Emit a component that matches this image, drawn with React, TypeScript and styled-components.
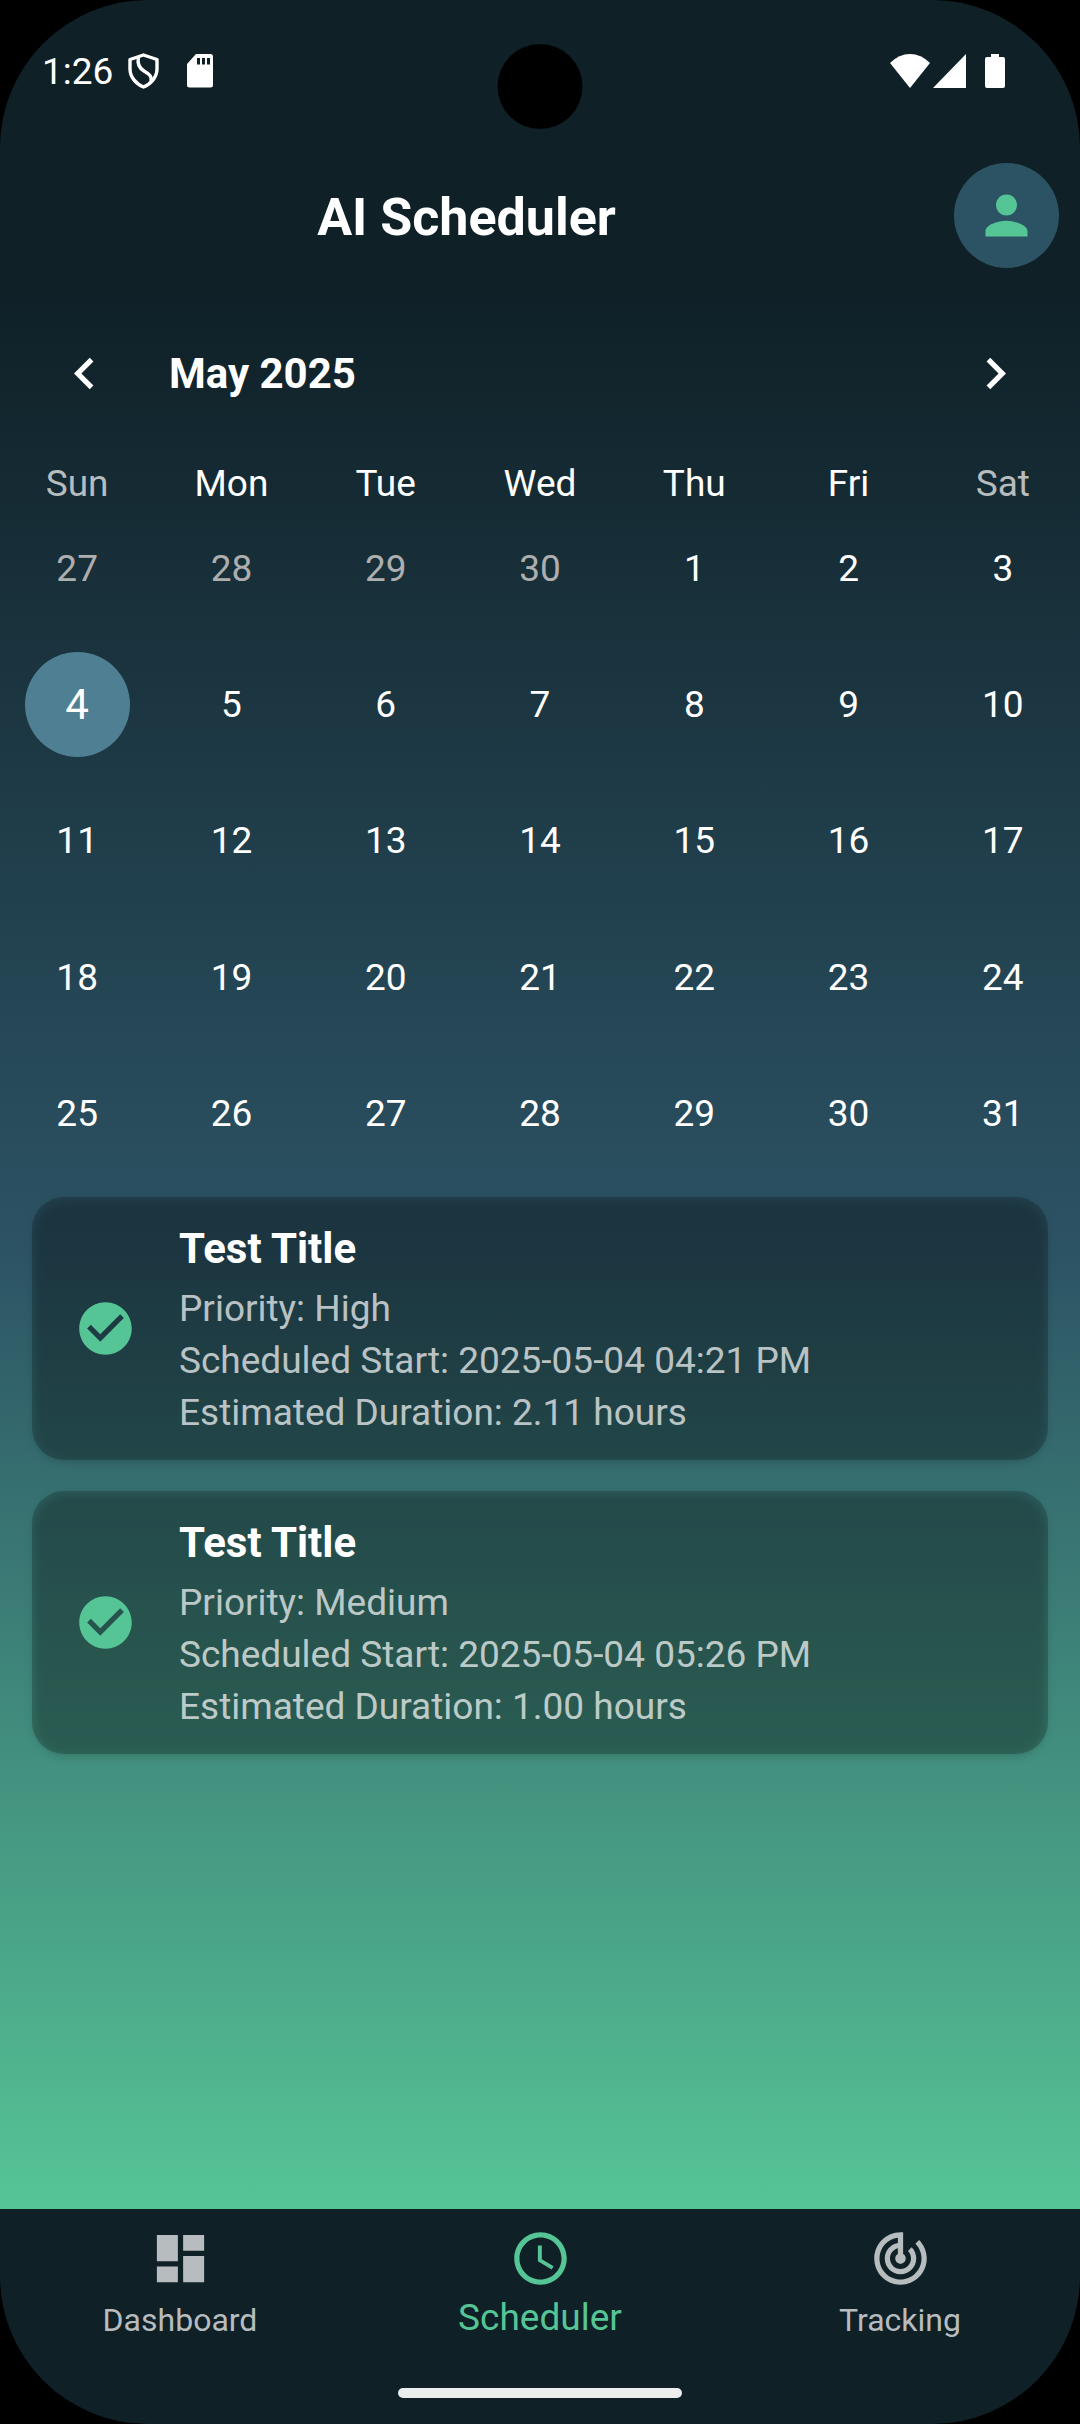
import React, { useState } from "react";
import styled, { createGlobalStyle } from "styled-components";

const colors = {
  ink: "#0f2027",
  slate: "#2c5364",
  mint: "#56c596",
  selected: "#4f7f93",
  muted: "#b7bcbe",
  outside: "#aeaeae",
};

const GlobalStyle = createGlobalStyle`
  *, *::before { box-sizing: border-box; }
  body {
    margin: 0;
    background: #000;
    color: #fff;
    font-family: Roboto, "Noto Sans", sans-serif;
  }
  h1, h2, h3, p, ul { margin: 0; padding: 0; }
  button { font: inherit; color: inherit; background: none; border: 0; padding: 0; cursor: pointer; }
`;

const Screen = styled.div`
  position: relative;
  display: flex;
  flex-direction: column;
  min-height: 100vh;
  overflow: hidden;
  border-radius: 148px;
  background: ${colors.ink};
`;

const StatusBar = styled.div`
  display: flex;
  align-items: center;
  justify-content: space-between;
  height: 142px;
  padding: 0 75px 0 42px;
  font-size: 37px;
`;

const StatusGroup = styled.div<{ $gap: number }>`
  display: flex;
  align-items: center;
  gap: ${(p) => p.$gap}px;
`;

const Camera = styled.div`
  position: absolute;
  top: 44px;
  left: 50%;
  width: 85px;
  height: 85px;
  transform: translateX(-50%);
  border-radius: 50%;
  background: #000;
`;

const AppBar = styled.header`
  display: flex;
  align-items: center;
  gap: 21px;
  height: 147px;
  padding: 0 21px 0 0;
`;

const AppTitle = styled.h1`
  flex: 1;
  padding-top: 3px;
  text-align: center;
  font-size: 52px;
  font-weight: 700;
  line-height: 63px;
`;

const Avatar = styled.button`
  display: grid;
  place-items: center;
  width: 105px;
  height: 105px;
  border-radius: 50%;
  background: ${colors.slate};
  color: ${colors.mint};
`;

const Main = styled.main`
  flex: 1;
  padding-top: 53px;
  background: linear-gradient(${colors.ink}, ${colors.slate}, ${colors.mint});
`;

const MonthBar = styled.div`
  display: flex;
  align-items: center;
  gap: 53px;
  padding: 0 53px;
`;

const MonthTitle = styled.h2`
  flex: 1;
  font-size: 42px;
  font-weight: 700;
  line-height: 63px;
`;

const IconButton = styled.button`
  display: flex;
`;

const Icon = styled.svg`
  display: block;
  width: 63px;
  height: 63px;
  fill: currentColor;
`;

const WeekRow = styled.div`
  display: grid;
  grid-template-columns: repeat(7, 1fr);
  margin-top: 63px;
`;

const Weekday = styled.span<{ $weekend: boolean }>`
  text-align: center;
  font-size: 37px;
  line-height: 32px;
  color: ${(p) => (p.$weekend ? colors.muted : "#fff")};
`;

const DayGrid = styled.div`
  display: grid;
  grid-template-columns: repeat(7, 1fr);
  grid-template-rows: repeat(5, 1fr);
  place-items: center;
  height: 682px;
`;

const Day = styled.button<{ $outside: boolean; $selected: boolean }>`
  width: 105px;
  height: 105px;
  border-radius: 50%;
  font-size: ${(p) => (p.$selected ? 42 : 37)}px;
  color: ${(p) => (p.$outside ? colors.outside : "#fff")};
  background: ${(p) => (p.$selected ? colors.selected : "transparent")};
`;

const TaskList = styled.ul`
  display: flex;
  flex-direction: column;
  gap: 31px;
  padding: 15px 32px 32px;
  list-style: none;
`;

const TaskCard = styled.li`
  position: relative;
  z-index: 0;
  display: flex;
  align-items: center;
  gap: 42px;
  padding: 20px 42px 21px;
  border-radius: 32px;
  background: rgba(0, 0, 0, 0.2);

  &::before {
    content: "";
    position: absolute;
    z-index: -1;
    inset: 4px 2px -2px;
    border-radius: 32px;
    background: rgba(0, 0, 0, 0.18);
    filter: blur(4px);
  }
`;

const TaskIcon = styled(Icon)`
  color: ${colors.mint};
`;

const TaskTitle = styled.h3`
  margin-bottom: 3px;
  font-size: 42px;
  font-weight: 700;
  line-height: 63px;
`;

const TaskLine = styled.p`
  font-size: 37px;
  line-height: 52px;
  color: rgba(255, 255, 255, 0.7);
`;

const Footer = styled.footer`
  display: flex;
  flex-direction: column;
  align-items: center;
  justify-content: space-between;
  height: 215px;
  padding: 18px 0 26px;
`;

const Nav = styled.nav`
  display: grid;
  grid-template-columns: repeat(3, 1fr);
  width: 100%;
`;

const NavLink = styled.a<{ $active: boolean }>`
  display: flex;
  flex-direction: column;
  align-items: center;
  gap: 5px;
  text-decoration: none;
  font-size: ${(p) => (p.$active ? 37 : 32)}px;
  line-height: ${(p) => (p.$active ? 46 : 50)}px;
  color: ${(p) => (p.$active ? colors.mint : colors.muted)};
`;

const HomeIndicator = styled.div`
  width: 284px;
  height: 10px;
  border-radius: 5px;
  background: #eceeee;
`;

const weekdays = ["Sun", "Mon", "Tue", "Wed", "Thu", "Fri", "Sat"];

const days = [
  ...[27, 28, 29, 30].map((date) => ({ date, outside: true })),
  ...Array.from({ length: 31 }, (_, i) => ({ date: i + 1, outside: false })),
];

const tasks = [
  { id: 1, title: "Test Title", priority: "High", start: "2025-05-04 04:21 PM", hours: "2.11" },
  { id: 2, title: "Test Title", priority: "Medium", start: "2025-05-04 05:26 PM", hours: "1.00" },
];

const tabs = [
  { label: "Dashboard", path: "M3 13h8V3H3v10zm0 8h8v-6H3v6zm10 0h8V11h-8v10zm0-18v6h8V3h-8z" },
  {
    label: "Scheduler",
    path: "M11.99 2C6.47 2 2 6.48 2 12s4.47 10 9.99 10C17.52 22 22 17.52 22 12S17.52 2 11.99 2zM12 20c-4.42 0-8-3.58-8-8s3.58-8 8-8 8 3.58 8 8-3.58 8-8 8zm.5-13H11v6l5.25 3.15.75-1.23-4.5-2.67z",
  },
  {
    label: "Tracking",
    path: "M19.07 4.93l-1.41 1.41C19.1 7.79 20 9.79 20 12c0 4.42-3.58 8-8 8s-8-3.58-8-8c0-4.08 3.05-7.44 7-7.93v2.02C8.16 6.57 6 9.03 6 12c0 3.31 2.69 6 6 6s6-2.69 6-6c0-1.66-.67-3.16-1.76-4.24l-1.41 1.41C15.55 9.9 16 10.9 16 12c0 2.21-1.79 4-4 4s-4-1.79-4-4c0-1.86 1.28-3.41 3-3.86v2.14c-.6.35-1 .98-1 1.72 0 1.1.9 2 2 2s2-.9 2-2c0-.74-.4-1.38-1-1.72V2h-1C6.48 2 2 6.48 2 12s4.48 10 10 10 10-4.48 10-10c0-2.76-1.12-5.26-2.93-7.07z",
  },
];

function MaterialIcon({ path }: { path: string }) {
  return (
    <Icon viewBox="0 0 24 24" aria-hidden="true">
      <path d={path} />
    </Icon>
  );
}

function StatusIcons() {
  return (
    <StatusBar>
      <StatusGroup $gap={15}>
        <span>1:26</span>
        <StatusGroup $gap={28}>
          <svg width="31" height="36" viewBox="0 0 31 36" fill="none" stroke="#fff" strokeWidth="3.4" strokeLinejoin="round" aria-hidden="true">
            <path d="M15.500 2 L29 6.500 V16 C29 24 23 31 15.500 34 C8 31 2 24 2 16 V6.500 Z" />
            <path d="M10.500 4 C9 11 11 15 16 18 C21 21 24 23 23 28" />
          </svg>
          <svg width="26" height="34" viewBox="0 0 26 34" fill="#fff" aria-hidden="true">
            <path fillRule="evenodd" d="M9 0 H23.500 Q26 0 26 2.500 V31 Q26 33.500 23.500 33.500 H2.500 Q0 33.500 0 31 V10 Z M10 4 V10.500 H13 V4 Z M15 4 V10.500 H18 V4 Z M20 4 V10.500 H23 V4 Z" />
          </svg>
        </StatusGroup>
      </StatusGroup>
      <StatusGroup $gap={19}>
        <StatusGroup $gap={3}>
          <svg width="40" height="34" viewBox="0 0 40 34" fill="#fff" aria-hidden="true">
            <path d="M20 34 L0 9 Q9 0 20 0 Q31 0 40 9 Z" />
          </svg>
          <svg width="33" height="34" viewBox="0 0 33 34" fill="#fff" aria-hidden="true">
            <path d="M33 0 V34 H0 Z" />
          </svg>
        </StatusGroup>
        <svg width="20" height="34" viewBox="0 0 20 34" fill="#fff" aria-hidden="true">
          <path d="M6 0 H14 V3 H18 Q20 3 20 5 V32 Q20 34 18 34 H2 Q0 34 0 32 V5 Q0 3 2 3 H6 Z" />
        </svg>
      </StatusGroup>
    </StatusBar>
  );
}

export default function App() {
  const [selected, setSelected] = useState(7);
  const [activeTab, setActiveTab] = useState("Scheduler");

  return (
    <>
      <GlobalStyle />
      <Screen>
        <StatusIcons />
        <Camera />
        <AppBar>
          <AppTitle>AI Scheduler</AppTitle>
          <Avatar type="button" aria-label="Profile">
            <MaterialIcon path="M12 12c2.210 0 4-1.790 4-4s-1.790-4-4-4-4 1.790-4 4 1.790 4 4 4zm0 2c-2.670 0-8 1.340-8 4v2h16v-2c0-2.660-5.330-4-8-4z" />
          </Avatar>
        </AppBar>
        <Main>
          <MonthBar>
            <IconButton type="button" aria-label="Previous month">
              <MaterialIcon path="M15.410 7.410L14 6l-6 6 6 6 1.410-1.410L10.830 12z" />
            </IconButton>
            <MonthTitle>May 2025</MonthTitle>
            <IconButton type="button" aria-label="Next month">
              <MaterialIcon path="M10 6L8.590 7.410 13.170 12l-4.580 4.590L10 18l6-6z" />
            </IconButton>
          </MonthBar>
          <WeekRow>
            {weekdays.map((name) => (
              <Weekday key={name} $weekend={name === "Sun" || name === "Sat"}>
                {name}
              </Weekday>
            ))}
          </WeekRow>
          <DayGrid>
            {days.map((day, index) => (
              <Day
                key={index}
                type="button"
                $outside={day.outside}
                $selected={index === selected}
                aria-pressed={index === selected}
                onClick={() => setSelected(index)}
              >
                {day.date}
              </Day>
            ))}
          </DayGrid>
          <TaskList>
            {tasks.map((task) => (
              <TaskCard key={task.id}>
                <TaskIcon viewBox="0 0 24 24" aria-hidden="true">
                  <path d="M12 2C6.480 2 2 6.480 2 12s4.480 10 10 10 10-4.480 10-10S17.520 2 12 2zm-2 15l-5-5 1.410-1.410L10 14.170l7.590-7.590L19 8l-9 9z" />
                </TaskIcon>
                <div>
                  <TaskTitle>{task.title}</TaskTitle>
                  <TaskLine>Priority: {task.priority}</TaskLine>
                  <TaskLine>Scheduled Start: {task.start}</TaskLine>
                  <TaskLine>Estimated Duration: {task.hours} hours</TaskLine>
                </div>
              </TaskCard>
            ))}
          </TaskList>
        </Main>
        <Footer>
          <Nav aria-label="Main">
            {tabs.map((tab) => (
              <NavLink
                key={tab.label}
                href={`#${tab.label.toLowerCase()}`}
                $active={tab.label === activeTab}
                aria-current={tab.label === activeTab ? "page" : undefined}
                onClick={() => setActiveTab(tab.label)}
              >
                <MaterialIcon path={tab.path} />
                {tab.label}
              </NavLink>
            ))}
          </Nav>
          <HomeIndicator />
        </Footer>
      </Screen>
    </>
  );
}
